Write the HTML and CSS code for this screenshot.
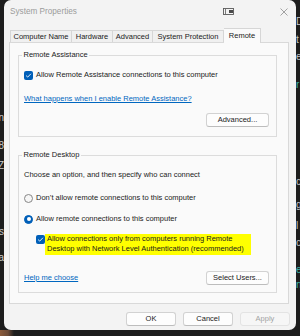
FILE: index.html
```html
<!DOCTYPE html>
<html>
<head>
<meta charset="utf-8">
<title>System Properties</title>
<link rel="stylesheet" href="styles.css">
</head>
<body>
<div class="desk">
  <div class="strip strip-left">
    <span class="ch l1">n</span>
    <span class="ch l2">8</span>
    <span class="ch l3">Z</span>
    <span class="ch l4">s</span>
    <span class="ch l5">a</span>
  </div>
  <div class="window">
    <div class="titlebar">
      <span class="title">System Properties</span>
      <svg class="snap" width="11" height="7" viewBox="0 0 11 7"><rect x="0.5" y="0.5" width="10" height="6" fill="none" stroke="#5a5a5a" stroke-width="0.9"/><line x1="2.5" y1="1" x2="2.5" y2="6" stroke="#5a5a5a" stroke-width="0.8"/><rect x="6" y="2" width="4" height="3" fill="#4a4a4a"/></svg>
      <svg class="close" width="8" height="8" viewBox="0 0 8 8"><path d="M0.5 0.5 L7.5 7.5 M7.5 0.5 L0.5 7.5" stroke="#8c8c8c" stroke-width="0.8" fill="none"/></svg>
    </div>
    <div class="tabs">
      <div class="tab w-cn">Computer Name</div>
      <div class="tab w-hw">Hardware</div>
      <div class="tab w-adv">Advanced</div>
      <div class="tab w-sp">System Protection</div>
      <div class="tab active w-rm">Remote</div>
    </div>
    <div class="pane">
      <fieldset class="group g1">
        <legend>Remote Assistance</legend>
        <div class="check-row"><span class="cb"><svg width="9" height="9" viewBox="0 0 9 9"><path d="M2.1 4.6 L3.7 6.1 L6.9 2.8" stroke="#fff" stroke-width="0.9" fill="none"/></svg></span><span class="lbl">Allow Remote Assistance connections to this computer</span></div>
        <a class="link block-link">What happens when I enable Remote Assistance?</a>
        <div class="btn-row"><button class="btn wide">Advanced...</button></div>
      </fieldset>
      <fieldset class="group g2">
        <legend>Remote Desktop</legend>
        <p class="desc">Choose an option, and then specify who can connect</p>
        <div class="radio-row r1"><span class="radio"></span><span class="lbl">Don’t allow remote connections to this computer</span></div>
        <div class="radio-row r2"><span class="radio on"></span><span class="lbl">Allow remote connections to this computer</span></div>
        <div class="nla-row"><span class="cb"><svg width="9" height="9" viewBox="0 0 9 9"><path d="M2.1 4.6 L3.7 6.1 L6.9 2.8" stroke="#fff" stroke-width="0.9" fill="none"/></svg></span><span class="hl">Allow connections only from computers running Remote<br>Desktop with Network Level Authentication (recommended)</span></div>
        <div class="help-row"><a class="link">Help me choose</a><button class="btn wide">Select Users...</button></div>
      </fieldset>
    </div>
    <div class="footer">
      <button class="btn foot">OK</button>
      <button class="btn foot">Cancel</button>
      <button class="btn foot disabled">Apply</button>
    </div>
  </div>
  <div class="strip strip-right">
    <span class="ch r1">D</span>
    <span class="ch r2">t</span>
    <span class="ch r3">e</span>
    <span class="ch r4 teal">r</span>
    <span class="ch r5">c</span>
    <span class="ch r6">g</span>
    <span class="ch r7">l</span>
    <span class="ch r8">c</span>
    <span class="ch r9 teal">e</span>
    <span class="ch r10 teal">n</span>
  </div>
</div>
</body>
</html>
```

FILE: styles.css
```css
* { box-sizing: border-box; }
html, body { margin: 0; padding: 0; }
body {
  width: 300px;
  height: 336px;
  overflow: hidden;
  background: #1d1d1d;
  font-family: "Liberation Sans", Arial, sans-serif;
  font-size: 7.5px;
  color: #1b1b1b;
}
.desk {
  display: flex;
  height: 336px;
  background: linear-gradient(to right, #8a5a3a 0, #6b4a36 8px, #1d1d1d 14px) no-repeat left bottom / 100% 6px, #1d1d1d;
}

/* background app fragments */
.strip {
  width: 4px;
  flex: 0 0 4px;
  overflow: hidden;
  display: flex;
  flex-direction: column;
  color: #c9c9c9;
  font-size: 10px;
  line-height: 10px;
}
.strip-left { align-items: flex-end; }
.strip-right { align-items: flex-start; }
.ch { white-space: nowrap; }
.teal { color: #3fb6a8; }
.l1 { margin-top: 113px; }
.l2 { margin-top: 18px; }
.l3 { margin-top: 10px; }
.l4 { margin-top: 56px; }
.l5 { margin-top: 16px; }
.r1 { margin-top: 17px; }
.r2 { margin-top: 8px; }
.r3 { margin-top: 7px; }
.r4 { margin-top: 18px; }
.r5 { margin-top: 87px; }
.r6 { margin-top: 13px; }
.r7 { margin-top: 11px; }
.r8 { margin-top: 7px; }
.r9 { margin-top: 17px; }
.r10 { margin-top: 5px; }

/* window */
.window {
  width: 292px;
  flex: 0 0 292px;
  height: 330px;
  background: #f3f3f3;
  border-radius: 7px;
  display: flex;
  flex-direction: column;
}
.titlebar {
  height: 28px;
  display: flex;
  align-items: flex-start;
  padding: 7px 8px 0 6px;
}
.title {
  font-size: 8.2px;
  line-height: 10px;
  color: #9b9b9b;
}
.snap { margin-left: auto; margin-right: 46px; margin-top: 1px; }
.close { margin-top: 1px; }

/* tabs */
.tabs {
  height: 14px;
  display: flex;
  align-items: flex-end;
  margin-left: 6px;
}
.tab {
  height: 12px;
  line-height: 11px;
  text-align: center;
  border: 1px solid #d6d6d6;
  border-bottom: 0;
  border-left-width: 0;
  background: #f0f0f0;
  white-space: nowrap;
}
.tab:first-child { border-left-width: 1px; }
.w-cn { width: 62px; }
.w-hw { width: 41px; }
.w-adv { width: 40px; }
.w-sp { width: 71px; }
.w-rm { width: 37px; }
.tab.active {
  position: relative;
  z-index: 1;
  height: 15px;
  line-height: 13px;
  margin-bottom: -1px;
  background: #fafafa;
  border-left-width: 0;
}

/* pane */
.pane {
  width: 280px;
  height: 262px;
  margin-left: 5px;
  border: 1px solid #d9d9d9;
  background: #fafafa;
  padding: 0 0 0 8px;
}
.group {
  width: 259px;
  margin: 0;
  border: 1px solid #dcdcdc;
  padding: 0 7px 9px 5px;
  min-width: 0;
}
.group legend {
  padding: 0 1.5px;
  margin-left: -2px;
  line-height: 10px;
  font-size: 7.5px;
}
.g1 { margin-top: 7px; }
.g2 { margin-top: 13px; padding-bottom: 7px; }

.check-row, .radio-row {
  display: flex;
  align-items: center;
  height: 10px;
  line-height: 10px;
}
.check-row { margin-top: 10px; }
.lbl { margin-left: 3px; white-space: nowrap; }
.cb {
  width: 9px;
  height: 9px;
  flex: 0 0 9px;
  border-radius: 2px;
  background: #005fb8;
  display: flex;
}
.link {
  color: #0067c0;
  text-decoration: underline;
  line-height: 10px;
  white-space: nowrap;
}
.block-link { display: block; margin-top: 14px; }
.btn-row { display: flex; justify-content: flex-end; margin-top: 9px; }

.btn {
  height: 14px;
  padding: 0;
  font-family: "Liberation Sans", Arial, sans-serif;
  font-size: 7.5px;
  line-height: 12px;
  color: #1b1b1b;
  background: #fdfdfd;
  border: 1px solid #d2d2d2;
  border-bottom-color: #bdbdbd;
  border-radius: 3px;
}
.btn.wide { width: 63px; }
.btn.foot { width: 50px; }
.btn.disabled {
  background: #f6f6f6;
  border-color: #e3e3e3;
  color: #a3a3a3;
}

.desc { margin: 10px 0 0; line-height: 10px; }
.r1.radio-row { margin-top: 13px; }
.r2.radio-row { margin-top: 11px; }
.radio {
  width: 9px;
  height: 9px;
  flex: 0 0 9px;
  border-radius: 50%;
  border: 1px solid #868686;
  background: #f6f6f6;
  display: flex;
  align-items: center;
  justify-content: center;
}
.radio.on { background: #005fb8; border-color: #005fb8; }
.radio.on::after {
  content: "";
  width: 4px;
  height: 4px;
  border-radius: 50%;
  background: #fff;
}
.nla-row {
  display: flex;
  align-items: flex-start;
  margin: 10px 0 0 12px;
}
.nla-row .cb { margin-top: 1px; }
.hl {
  width: 206px;
  flex: 0 0 206px;
  background: #ffff00;
  padding: 0 0 1px 2px;
  line-height: 10px;
  white-space: nowrap;
}
.help-row {
  display: flex;
  justify-content: space-between;
  align-items: center;
  margin-top: 16px;
}

.footer {
  display: flex;
  justify-content: flex-end;
  gap: 7px;
  margin-top: 8px;
  padding-right: 6px;
}
```
